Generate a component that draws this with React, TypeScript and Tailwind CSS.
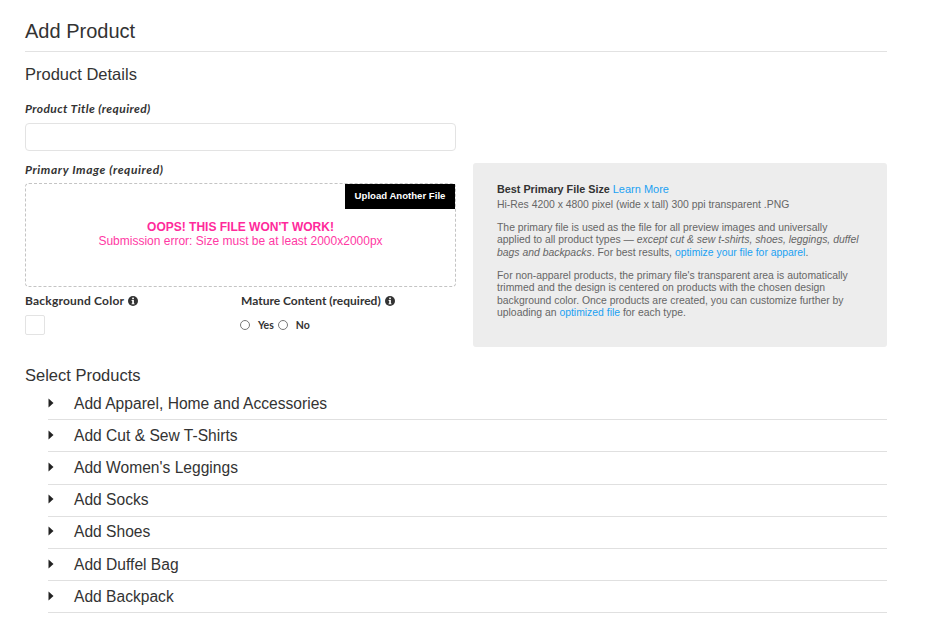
import React from "react";

const sans = "font-['Liberation_Sans',Arial,sans-serif]";
const label = "font-['Lato',sans-serif] font-bold text-[12px] leading-[14px] text-[#333]";

function Info() {
  return (
    <svg width="10" height="10" viewBox="0 0 10 10" className="inline-block align-[-1px] ml-[1px]">
      <circle cx="5" cy="5" r="5" fill="#333" />
      <rect x="4.2" y="1.6" width="1.7" height="1.6" fill="#fff" />
      <path d="M3.6 4h2.3v3.4h.7v.9H3.5v-.9h.7V4.9h-.6z" fill="#fff" />
    </svg>
  );
}

function Row({ text }: { text: string }) {
  return (
    <div className="h-[32.2px] border-b border-[#e0e0e0] flex items-center">
      <svg width="6" height="10" viewBox="0 0 6 10" className="mt-[-2px]">
        <path d="M0.5 0.5 L5.5 5 L0.5 9.5 Z" fill="#222" />
      </svg>
      <span className="ml-[20px] text-[15.6px] leading-[20px] text-[#333]">{text}</span>
    </div>
  );
}

export default function App() {
  return (
    <div className={`${sans} w-[939px] h-[632px] overflow-hidden bg-white pl-[25px] pr-[52px] text-[#333]`}>
      <h1 className="pt-[18px] text-[20px] leading-[26px] text-[#333] pb-[7px] border-b border-[#e2e2e2]">Add Product</h1>
      <h2 className="mt-[11px] text-[16.5px] leading-[22px]">Product Details</h2>
      <div className={`${label} italic tracking-[0.4px] mt-[17px]`}>Product Title (required)</div>
      <div className="mt-[7px] w-[431px] h-[28px] border border-[#e3e3e3] rounded-[4px] bg-white" />
      <div className="flex mt-[12px]">
        <div className="w-[431px] shrink-0">
          <div className={`${label} italic tracking-[0.6px]`}>Primary Image (required)</div>
          <div className="relative mt-[6px] h-[104px] border border-dashed border-[#c4c4c4] rounded-[4px] flex flex-col items-center pt-[36px]">
            <div className="absolute top-0 right-0 w-[110px] h-[25px] bg-black text-white text-[9.6px] font-bold flex items-center justify-center">Upload Another File</div>
            <div className="text-[12px] leading-[14px] font-bold text-[#ff2a9b]">OOPS! THIS FILE WON'T WORK!</div>
            <div className="text-[12px] leading-[14px] text-[#ff39a4]">Submission error: Size must be at least 2000x2000px</div>
          </div>
          <div className="flex mt-[7px]">
            <div className="w-[216px]">
              <div className={`${label} tracking-[0.2px]`}>Background Color <Info /></div>
              <div className="mt-[7px] w-[20px] h-[20px] border border-[#e3e3e3] rounded-[2px]" />
            </div>
            <div>
              <div className={label}>Mature Content (required) <Info /></div>
              <div className="font-['Lato',sans-serif] font-bold text-[10.5px] leading-[14px] text-[#333] flex items-center mt-[9px]">
                <span className="ml-[-1px] w-[10px] h-[10px] rounded-full border border-[#777] bg-white" />
                <span className="ml-[8px] mt-[1px]">Yes</span>
                <span className="ml-[4px] w-[10px] h-[10px] rounded-full border border-[#777] bg-white" />
                <span className="ml-[8px] mt-[1px]">No</span>
              </div>
            </div>
          </div>
        </div>
        <div className="ml-[17px] w-[414px] h-[184px] bg-[#ededed] rounded-[3px] pl-[24px] pt-[20px] text-[10.4px] leading-[12.4px] text-[#666]">
          <div><b className="text-[#333] text-[10.8px]">Best Primary File Size</b> <span className="text-[#1ba1f2] text-[11px]">Learn More</span></div>
          <div className="mt-[3px]">Hi-Res 4200 x 4800 pixel (wide x tall) 300 ppi transparent .PNG</div>
          <p className="mt-[10px] w-[366px]">The primary file is used as the file for all preview images and universally applied to all product types — <i>except cut &amp; sew t-shirts, shoes, leggings, duffel bags and backpacks</i>. For best results, <span className="text-[#1ba1f2]">optimize your file for apparel</span>.</p>
          <p className="mt-[11px] w-[366px]">For non-apparel products, the primary file's transparent area is automatically trimmed and the design is centered on products with the chosen design background color. Once products are created, you can customize further by uploading an <span className="text-[#1ba1f2]">optimized file</span> for each type.</p>
        </div>
      </div>
      <h2 className="mt-[17px] text-[16.5px] leading-[22px]">Select Products</h2>
      <div className="ml-[23px] mt-[2px]">
        {["Add Apparel, Home and Accessories", "Add Cut & Sew T-Shirts", "Add Women's Leggings", "Add Socks", "Add Shoes", "Add Duffel Bag", "Add Backpack"].map((t) => (
          <Row key={t} text={t} />
        ))}
      </div>
    </div>
  );
}
